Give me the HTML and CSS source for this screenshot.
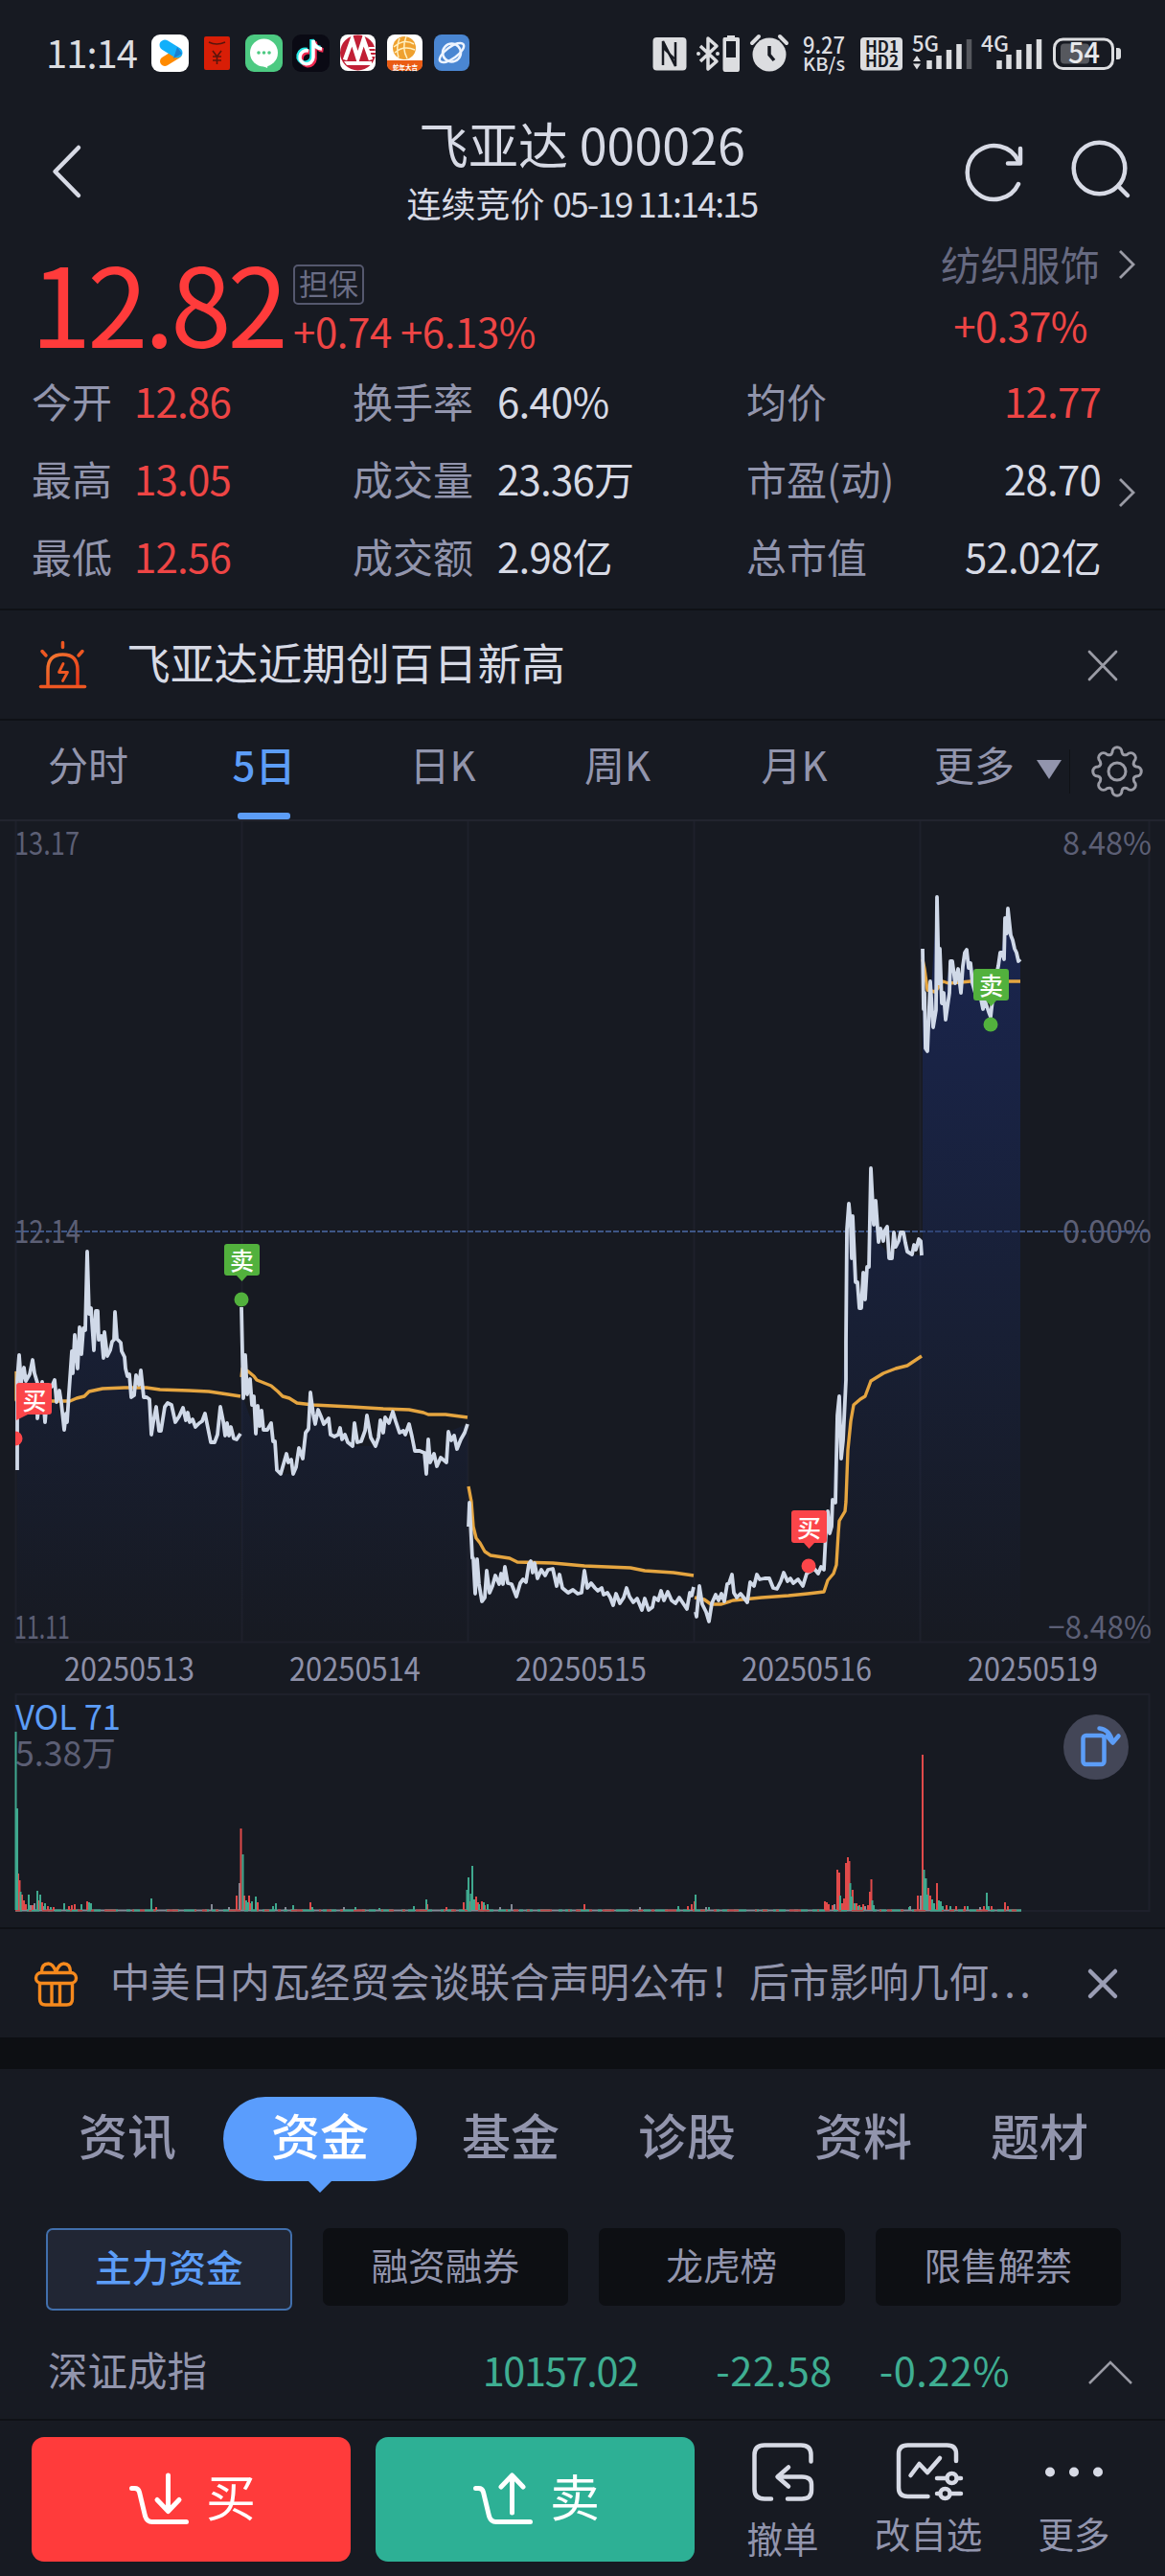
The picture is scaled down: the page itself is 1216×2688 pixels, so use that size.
FILE: index.html
```
<!DOCTYPE html>
<html lang="zh-CN">
<head>
    <meta charset="UTF-8">
    <meta name="viewport" content="width=device-width, initial-scale=1.0">
    <title>飞亚达 000026</title>
    <link rel="stylesheet" href="styles.css">
</head>
<body>

<!-- 状态栏 -->
<div class="status-bar">
    <span class="status-time">11:14</span>
    <svg class="status-apps" width="334" height="40" viewBox="157 37 334 40">
        <rect x="158" y="37" width="39" height="39" rx="9" fill="#fff"/>
        <path d="M172 65l13-8" stroke="#ff8a00" stroke-width="10" stroke-linecap="round"/>
        <path d="M172 48l13 8" stroke="#12b0fa" stroke-width="11" stroke-linecap="round"/>
        <path d="M181 62l9-5-5-7z" fill="#1a7fd0"/>
        <rect x="213" y="39" width="27" height="35" rx="2" fill="#d81e06"/>
        <path d="M218 45q8 4 17 0M222 54l4.500 6 4.500-6M226.500 60v8M222 60h9M222 64h9" fill="none" stroke="#5a150c" stroke-width="1.600"/>
        <rect x="256" y="37" width="39" height="39" rx="9" fill="#4dca82"/>
        <circle cx="275.500" cy="56" r="14.500" fill="#fff"/>
        <path d="M270 68l9 4 1-6z" fill="#fff"/>
        <g fill="#4dca82"><circle cx="270" cy="56" r="1.800"/><circle cx="275.500" cy="56" r="1.800"/><circle cx="281" cy="56" r="1.800"/></g>
        <rect x="305" y="37" width="39" height="39" rx="9" fill="#0a0a14"/>
        <g fill="none" stroke-width="4.500">
            <path d="M322 54a7 7 0 1 0 5 7v-18q1 8 9 9" stroke="#ef2950" transform="translate(1.500 1.500)"/>
            <path d="M322 54a7 7 0 1 0 5 7v-18q1 8 9 9" stroke="#25e8e4" transform="translate(-1.500 -1)"/>
            <path d="M322 54a7 7 0 1 0 5 7v-18q1 8 9 9" stroke="#fff" stroke-width="3.500"/>
        </g>
        <rect x="355" y="37" width="37" height="38" rx="8" fill="#fff"/>
        <circle cx="373.500" cy="56" r="18.500" fill="#c11f35"/>
        <path d="M360 63.500l7.500-21 6 19 6-19 7.500 21" fill="none" stroke="#fff" stroke-width="4.500"/>
        <path d="M359 65h29v4h-26z" fill="#fff"/>
        <path d="M385 51h7M386 55h6M387 59h5" stroke="#fff" stroke-width="2"/>
        <rect x="404" y="37" width="37" height="38" rx="8" fill="#fff"/>
        <path d="M404 64h37v4q0 7-8 7h-21q-8 0-8-7z" fill="#ea5c14"/>
        <circle cx="422" cy="51" r="12" fill="#efa12f"/>
        <path d="M411 50q11-9 21-3M412 56q9-8 21-3M417 41q-4 10-1 20M424 39q-5 12 1 23" fill="none" stroke="#fff0c0" stroke-width="1.500"/>
        <text x="410" y="74" class="tiny-text">蛇年大吉</text>
        <rect x="453" y="37" width="37" height="38" rx="8" fill="#4a86d2"/>
        <circle cx="471.500" cy="56" r="9.500" fill="none" stroke="#eef4ff" stroke-width="2.500"/>
        <ellipse cx="471.500" cy="56" rx="15" ry="6" transform="rotate(-36 471.500 56)" fill="none" stroke="#eef4ff" stroke-width="2.500"/>
    </svg>
    <svg class="status-icons" width="492" height="40" viewBox="680 36 492 40">
        <rect x="681.500" y="39" width="35" height="34.500" rx="4" fill="#dcdde0"/>
        <path d="M692 68V43l13 26V44" fill="none" stroke="#171a22" stroke-width="2.500"/>
        <path d="M692 50l13 12M692 46l13 21" stroke="#171a22" stroke-width="1.800"/>
        <path d="M731 48l17 16-9 8V40l9 8-17 16" fill="none" stroke="#dcdde0" stroke-width="3.500" stroke-linejoin="round"/>
        <circle cx="729" cy="56" r="2" fill="#dcdde0"/><circle cx="749" cy="56" r="2" fill="#dcdde0"/>
        <path d="M759 37h8v2h3.500q1.500 0 1.500 2v31q0 3-2 3h-13q-2.500 0-2.500-3V41q0-2 1.500-2h3z" fill="#dcdde0"/>
        <rect x="758" y="43" width="10" height="17" fill="#171a22"/>
        <circle cx="803" cy="57" r="17.500" fill="#dcdde0"/>
        <path d="M785 45l7-7M821 45l-7-7" stroke="#dcdde0" stroke-width="4" stroke-linecap="round"/>
        <path d="M803 48v9l5 6" fill="none" stroke="#171a22" stroke-width="3.500"/>
        <g class="status-text">
            <text x="838" y="56" font-size="24" textLength="44" lengthAdjust="spacingAndGlyphs">9.27</text>
            <text x="838" y="74" font-size="19" textLength="44" lengthAdjust="spacingAndGlyphs">KB/s</text>
            <text x="952" y="53.500" font-size="23" textLength="28" lengthAdjust="spacingAndGlyphs">5G</text>
            <text x="1024" y="53.500" font-size="23" textLength="29" lengthAdjust="spacingAndGlyphs">4G</text>
        </g>
        <rect x="898" y="39" width="44" height="34.500" rx="4" fill="#dcdde0"/>
        <g class="hd-text">
            <text x="903" y="54.500" textLength="35" lengthAdjust="spacingAndGlyphs">HD1</text>
            <text x="903" y="70" textLength="35" lengthAdjust="spacingAndGlyphs">HD2</text>
        </g>
        <path d="M953 64l4-6 4 6zM953 66.500l4 6 4-6z" fill="#dcdde0"/>
        <path d="M970 72v-9M980 72V58M990.500 72V52M1001 72V46" stroke="#dcdde0" stroke-width="5.500"/>
        <path d="M1011.500 72V41" stroke="#56585e" stroke-width="5.500"/>
        <path d="M1043 72v-9M1053 72V57M1063.500 72V52M1074 72V46M1084.500 72V41" stroke="#dcdde0" stroke-width="5.500"/>
        <rect x="1100.500" y="41" width="61" height="30.500" rx="9" fill="none" stroke="#dcdde0" stroke-width="3"/>
        <rect x="1107" y="45.500" width="30" height="21" rx="4" fill="#56585e"/>
        <path d="M1165 50h2q3 0 3 3v6q0 3-3 3h-2z" fill="#dcdde0"/>
        <text x="1115" y="66" class="battery-text" textLength="33" lengthAdjust="spacingAndGlyphs">54</text>
    </svg>
</div>

<!-- 标题 -->
<div class="header">
    <svg class="back-icon" width="40" height="60" viewBox="50 149 40 60"><path d="M82 154l-24.500 25L82 204" fill="none" stroke="#d7dae5" stroke-width="4.500" stroke-linecap="round" stroke-linejoin="round"/></svg>
    <div class="header-title">
        <h1>飞亚达 <span class="code">000026</span></h1>
        <p>连续竞价 <span class="num">05-19 11:14:15</span></p>
    </div>
    <svg class="header-actions" width="180" height="70" viewBox="1004 144 180 70">
        <g fill="none" stroke="#d7dae5" stroke-width="4.500" stroke-linecap="round" stroke-linejoin="round">
            <path d="M1063 192a28 28 0 1 1 0-24"/>
            <path d="M1065 155v15.500h-13"/>
            <circle cx="1147.500" cy="175.500" r="26.800"/>
            <path d="M1168 195l9 9"/>
        </g>
    </svg>
</div>

<!-- 报价 -->
<div class="quote">
    <div class="quote-price">12.82</div>
    <div class="quote-change">
        <span class="tag">担保</span>
        <span class="change">+0.74 +6.13%</span>
    </div>
    <div class="sector">
        <div class="sector-name">纺织服饰</div>
        <div class="sector-change">+0.37%</div>
    </div>
    <svg class="chevron" width="20" height="34" viewBox="0 0 20 34"><path d="M2 3l14 14L2 31" fill="none" stroke="#9a9ba5" stroke-width="2.800"/></svg>
</div>

<div class="stats">
    <div class="stats-grid">
        <span class="label">今开</span><span class="value up">12.86</span>
        <span class="label">换手率</span><span class="value">6.40%</span>
        <span class="label">均价</span><span class="value right up">12.77</span>
        <span class="label">最高</span><span class="value up">13.05</span>
        <span class="label">成交量</span><span class="value">23.36万</span>
        <span class="label">市盈(动)</span><span class="value right">28.70</span>
        <span class="label">最低</span><span class="value up">12.56</span>
        <span class="label">成交额</span><span class="value">2.98亿</span>
        <span class="label">总市值</span><span class="value right">52.02亿</span>
    </div>
    <svg class="stats-chevron" width="20" height="34" viewBox="0 0 20 34"><path d="M2 3l14 14L2 31" fill="none" stroke="#9a9ba5" stroke-width="2.800"/></svg>
</div>

<!-- 提示条 -->
<div class="notice">
    <svg class="notice-icon" width="52" height="54" viewBox="39 665 52 54">
        <defs><linearGradient id="alarm" x1="0" y1="0" x2="1" y2="1"><stop offset="0" stop-color="#f47b32"/><stop offset="1" stop-color="#e93416"/></linearGradient></defs>
        <g fill="none" stroke="#ee5722" stroke-width="3.500" stroke-linecap="round" stroke-linejoin="round">
            <path stroke="url(#alarm)" d="M50 713v-16q0-16 15.500-16T81 697v16"/>
            <path d="M42.500 714.500h46"/>
            <path d="M65.500 668.500v5M44 677.500l4 4.500M86 677.500l-4 4.500"/>
            <path stroke-width="2.800" d="M66 690.500l-4.500 9h9l-5 9"/>
        </g>
    </svg>
    <span class="notice-text">飞亚达近期创百日新高</span>
    <svg class="close" width="34" height="34" viewBox="0 0 34 34"><path d="M3 3l28 29M31 3L3 32" stroke="#9a9ba5" stroke-width="2.800" stroke-linecap="round"/></svg>
</div>

<!-- 周期切换 -->
<div class="period-tabs">
    <span class="period p1">分时</span>
    <span class="period p2 active">5日</span>
    <span class="period p3">日K</span>
    <span class="period p4">周K</span>
    <span class="period p5">月K</span>
    <span class="period more">更多</span>
    <svg class="triangle" width="26" height="20" viewBox="0 0 26 20"><path d="M0 0h26L13 20z" fill="#9295ad"/></svg>
    <span class="divider"></span>
    <svg class="gear" width="56" height="56" viewBox="-28 -28 56 56">
        <g fill="none" stroke="#9a9ba5" stroke-width="3" stroke-linejoin="round">
            <path d="M-5-20C-5-27 5-27 5-20Q6-16 10.500-17.700C15.500-22.600 22.600-15.500 17.700-10.500Q16-6 20-5C27-5 27 5 20 5Q16 6 17.700 10.500C22.600 15.500 15.500 22.600 10.500 17.700Q6 16 5 20C5 27-5 27-5 20Q-6 16-10.500 17.700C-15.500 22.600-22.600 15.500-17.700 10.500Q-16 6-20 5C-27 5-27-5-20-5Q-16-6-17.700-10.500C-22.600-15.500-15.500-22.600-10.500-17.700Q-6-16-5-20Z"/>
            <circle r="9"/>
        </g>
    </svg>
</div>

<!-- 五日走势图 -->
<div class="chart">
    <svg width="1216" height="1154" viewBox="0 857 1216 1154">
        <defs>
            <linearGradient id="area" gradientUnits="userSpaceOnUse" x1="0" y1="930" x2="0" y2="1714">
                <stop offset="0" stop-color="#1b2960" stop-opacity=".75"/>
                <stop offset=".5" stop-color="#1a2a5c" stop-opacity=".38"/>
                <stop offset="1" stop-color="#1a2a5c" stop-opacity="0"/>
            </linearGradient>
        </defs>
        <path class="grid" d="M16.500 857V1713.500H1199.500V857M252.500 857V1713M488.500 857V1713M724.500 857V1713M960.500 857V1713"/>
        <rect class="grid" x="16.500" y="1768" width="1183" height="226"/>
        <path class="zero-line" d="M16 1285H1199"/>

        <g class="area">
            <path d="M18 1714V1443L31 1434 39 1443 47 1462 59 1463 67 1492 72 1453 78 1393 83 1400 89 1388 91 1306 93 1371 98 1409 102 1368 108 1417 117 1400 120 1369 126 1401 137 1458 147 1430 156 1460 158 1497 163 1468 168 1493 175 1464 183 1484 191 1469 204 1489 214 1475 220 1505 230 1468 235 1498 251 1496V1714Z"/>
            <path d="M252 1714V1364L254 1459 267 1496 283 1485 293 1538 306 1538 316 1522 324 1453 338 1486 368 1509 392 1509 410 1473 433 1514 456 1530 466 1526 468 1494 488 1486V1714Z"/>
            <path d="M489 1714V1593L496 1663 527 1635 539 1666 554 1629 577 1637 593 1662 610 1639 640 1675 670 1680 724 1656V1714Z"/>
            <path d="M725 1714V1687L740 1692 764 1643 780 1672 790 1643 811 1658 860 1638 874 1477 883 1400 886 1256 899 1365 907 1322 909 1219 917 1296 931 1313 943 1286 952 1309 963 1310V1714Z"/>
            <path d="M963 1714V990L968 1097 978 936 983 1047 992 1003 1003 1036 1009 991 1034 1061 1052 948 1059 990 1065 1001V1714Z"/>
        </g>

        <!-- 均价线 -->
        <g class="avg-line">
            <path d="M17 1431V1461L55 1462 73 1462 80 1459 88 1457 93 1452 107 1449 130 1448 153 1448 167 1450 197 1451 218 1452 238 1455 251 1457"/>
            <path d="M252 1437L253 1428 259 1431 265 1436 268 1440 283 1446 290 1452 295 1457 302 1459 310 1464 327 1466 367 1468 400 1470 427 1471 442 1474 447 1476 465 1476 488 1479"/>
            <path d="M489 1551L492 1567 494 1593 497 1605 501 1610 506 1619 512 1623 532 1626 540 1630 577 1631 610 1634 658 1636 673 1639 703 1641 724 1644"/>
            <path d="M725 1667L735 1669 742 1674 753 1674 765 1670 795 1667 823 1665 843 1663 860 1661 864 1649 870 1642 873 1633 875 1600 876 1587 882 1577 883 1567 885 1513 888 1483 891 1466 898 1460 903 1457 909 1441 922 1433 935 1428 947 1425 956 1419 962 1415"/>
            <path d="M963 1001L965 1011 968 1033 976 1035 984 1024 990 1026 1003 1025 1013 1024 1065 1024"/>
        </g>

        <!-- 价格线 -->
        <g class="price-line">
            <path d="M18 1534V1440L20 1414 22 1443 25 1427 27 1441 31 1434 34 1419 36 1433 39 1443 39 1480 44 1442 47 1484 50 1447 54 1447 57 1440 59 1463 62 1451 64 1464 67 1492 69 1475 70 1484 72 1453 75 1410 76 1433 78 1393 81 1428 83 1385 85 1413 87 1386 89 1388 91 1306 93 1371 95 1365 98 1409 100 1368 102 1368 103 1398 106 1394 108 1417 109 1390 112 1415 115 1409 117 1400 119 1398 120 1369 122 1397 126 1401 127 1410 130 1416 131 1428 133 1436 135 1434 137 1458 140 1456 142 1435 145 1445 147 1430 150 1458 153 1458 156 1460 158 1497 160 1484 163 1468 166 1493 168 1493 172 1468 175 1464 179 1466 183 1484 187 1478 191 1469 194 1482 196 1474 198 1484 201 1481 204 1489 208 1485 211 1483 214 1475 217 1490 220 1505 224 1505 227 1497 230 1468 233 1483 235 1498 237 1485 239 1498 241 1489 244 1501 247 1502 251 1496"/>
            <path d="M252 1364L254 1459 256 1414 258 1455 261 1439 263 1466 265 1457 267 1496 269 1467 271 1488 273 1472 275 1492 279 1492 283 1485 285 1504 287 1504 289 1534 293 1538 295 1531 299 1517 301 1526 304 1523 306 1538 309 1531 312 1511 316 1522 319 1495 322 1491 324 1453 327 1476 329 1486 332 1471 335 1478 338 1486 343 1480 345 1497 349 1499 353 1497 355 1490 357 1502 360 1497 363 1505 368 1509 370 1485 373 1505 377 1504 381 1493 383 1477 387 1500 392 1509 395 1500 397 1482 400 1495 402 1479 406 1485 410 1473 413 1483 417 1495 421 1493 423 1497 427 1486 430 1499 433 1514 438 1514 443 1516 445 1538 447 1502 449 1526 453 1517 456 1530 460 1521 466 1526 468 1494 471 1503 474 1498 477 1512 481 1502 485 1495 488 1486"/>
            <path d="M489 1593L490 1568 493 1626 494 1626 496 1663 498 1627 500 1653 503 1671 506 1667 508 1639 511 1662 514 1655 517 1644 521 1653 523 1642 525 1653 527 1635 530 1652 534 1653 539 1666 543 1652 546 1648 549 1651 552 1632 554 1629 556 1641 558 1631 561 1647 565 1638 569 1644 572 1638 577 1637 581 1655 584 1643 587 1657 593 1662 598 1659 603 1663 607 1662 610 1639 613 1657 617 1652 621 1657 624 1660 628 1657 630 1664 634 1662 637 1667 640 1675 643 1663 647 1673 651 1667 654 1657 657 1666 661 1672 665 1668 670 1680 673 1668 677 1680 681 1677 683 1667 687 1670 690 1660 693 1670 697 1661 701 1670 705 1673 709 1667 713 1673 717 1679 720 1662 722 1665 724 1656"/>
            <path d="M726 1682L727 1687 730 1655 733 1674 737 1682 740 1692 743 1673 747 1664 750 1670 753 1663 756 1671 759 1653 761 1652 764 1643 766 1662 769 1667 773 1663 777 1668 780 1672 783 1651 787 1655 790 1643 793 1648 798 1647 803 1647 807 1657 811 1658 815 1650 818 1641 822 1650 825 1647 828 1652 833 1648 838 1655 842 1642 845 1640 850 1637 854 1642 857 1635 860 1638 862 1600 864 1577 866 1600 868 1593 869 1565 872 1568 874 1477 876 1457 878 1522 880 1503 883 1440 883 1400 884 1283 886 1256 888 1279 889 1313 890 1269 893 1338 895 1338 897 1365 899 1365 901 1328 903 1356 905 1322 907 1322 909 1219 912 1278 914 1253 917 1296 919 1282 922 1295 923 1285 926 1280 928 1313 931 1313 933 1286 935 1301 938 1295 940 1286 943 1286 945 1297 947 1306 952 1309 954 1299 956 1304 959 1293 961 1295 962 1310"/>
            <path d="M963 990L964 1053 965 1036 966 1094 968 1097 971 1024 974 1072 977 1054 978 936 980 1026 981 990 983 1047 985 1036 987 1064 991 1036 992 1003 994 1003 997 1026 1000 1011 1003 1036 1005 1008 1007 994 1009 991 1011 1010 1013 1005 1015 1026 1019 1040 1022 1033 1026 1053 1028 1044 1032 1056 1034 1061 1038 1026 1042 1008 1044 994 1046 994 1048 1001 1049 958 1051 974 1052 948 1055 976 1057 981 1059 990 1061 994 1063 1003 1065 1001"/>
        </g>

        <!-- 买卖点 -->
        <g class="marks">
            <circle class="sell" cx="252" cy="1356" r="7.500"/>
            <path class="sell" d="M237 1298h31q3 0 3 3v27q0 3-3 3h-10l-5.500 6-5.500-6h-10q-3 0-3-3v-27q0-3 3-3z"/>
            <text x="252.500" y="1325">卖</text>
            <circle class="sell" cx="1034" cy="1069" r="7.500"/>
            <path class="sell" d="M1019 1011h31q3 0 3 3v27q0 3-3 3h-10l-5.500 6-5.500-6h-10q-3 0-3-3v-27q0-3 3-3z"/>
            <text x="1034.500" y="1038">卖</text>
            <path class="buy" d="M16 1493.500a7.500 7.500 0 0 1 0 15z"/>
            <path class="buy" d="M20 1443h31q3 0 3 3v27q0 3-3 3H29l-12 6v-36q0-3 3-3z"/>
            <text x="36" y="1471">买</text>
            <circle class="buy" cx="844" cy="1634" r="7.500"/>
            <path class="buy" d="M829 1576h31q3 0 3 3v28q0 3-3 3h-10l-5.500 6-5.500-6h-10q-3 0-3-3v-28q0-3 3-3z"/>
            <text x="844.500" y="1604">买</text>
        </g>

        <!-- 坐标 -->
        <g class="axis">
            <text x="15" y="892" textLength="68" lengthAdjust="spacingAndGlyphs">13.17</text>
            <text x="15" y="1297" textLength="69" lengthAdjust="spacingAndGlyphs">12.14</text>
            <text x="15" y="1709.500" textLength="58" lengthAdjust="spacingAndGlyphs">11.11</text>
            <text x="1109" y="892" textLength="93" lengthAdjust="spacingAndGlyphs">8.48%</text>
            <text x="1109" y="1297" textLength="93" lengthAdjust="spacingAndGlyphs">0.00%</text>
            <text x="1094" y="1709.500" textLength="108" lengthAdjust="spacingAndGlyphs">−8.48%</text>
        </g>
        <g class="dates">
            <text x="67" y="1754" textLength="136" lengthAdjust="spacingAndGlyphs">20250513</text>
            <text x="302" y="1754" textLength="137" lengthAdjust="spacingAndGlyphs">20250514</text>
            <text x="538" y="1754" textLength="137" lengthAdjust="spacingAndGlyphs">20250515</text>
            <text x="774" y="1754" textLength="136" lengthAdjust="spacingAndGlyphs">20250516</text>
            <text x="1010" y="1754" textLength="136" lengthAdjust="spacingAndGlyphs">20250519</text>
        </g>

        <!-- 成交量 -->
        <text class="vol-title" x="16" y="1805" textLength="110" lengthAdjust="spacingAndGlyphs">VOL 71</text>
        <text class="vol-max" x="16" y="1843" textLength="105" lengthAdjust="spacingAndGlyphs">5.38万</text>
        <path class="vol flat" d="M16 1993.500H1066"/>
        <path class="vol green-dash" d="M16 1993.500H1066"/>
        <path class="vol red-dash" d="M16 1993.500H1066"/>
        <path class="vol grey" d="M32 1993v-5M36 1993v-7M45 1993v-4M221 1993v-6M239 1993v-3M250 1993v-28M298 1993v-3M359 1993v-3M522 1993v-3M534 1993v-6M668 1993v-3M737 1993v-3M871 1993v-6M876 1993v-6M903 1993v-4M950 1993v-4M961 1993v-15M1023 1993v-3"/>
        <path class="vol red" d="M19 1993v-38M20.500 1993v-31M23 1993v-16M25 1993v-10M27 1993v-6M34 1993v-5M40 1993v-10M44 1993v-8M50 1993v-4M56 1993v-3M72 1993v-4M75 1993v-5M78 1993v-6M91 1993v-9M163 1993v-3M247 1993v-15M251.500 1993v-85M255 1993v-15M260 1993v-15M262 1993v-7M269 1993v-8M324 1993v-8M446 1993v-6M466 1993v-3M484 1993v-8M490 1993v-9M497 1993v-14M499 1993v-8M503 1993v-9M506 1993v-5M610 1993v-6M718 1993v-4M722 1993v-6M725 1993v-9M861 1993v-9M863 1993v-8M865 1993v-6M869 1993v-5M874 1993v-42M876 1993v-39M879 1993v-7M881 1993v-12M883 1993v-49M885 1993v-55M886.500 1993v-51M890 1993v-21M894 1993v-7M897 1993v-5M901 1993v-6M906 1993v-5M908 1993v-19M909.500 1993v-32M958 1993v-15M963 1993v-162M965 1993v-22M969 1993v-23M971 1993v-15M978 1993v-28M988 1993v-5M998 1993v-4M1007 1993v-4M1027 1993v-4M1035 1993v-4M1049 1993v-8M1052 1993v-4"/>
        <path class="vol green" d="M16.500 1993v-186M18 1993v-106M21.500 1993v-19M30 1993v-16M39 1993v-20M42 1993v-16M47 1993v-7M53 1993v-3M67 1993v-7M85 1993v-6M93 1993v-8M95 1993v-7M158 1993v-12M253.500 1993v-58M257 1993v-10M259 1993v-8M263 1993v-9M267 1993v-14M285 1993v-4M288 1993v-7M306 1993v-5M326 1993v-3M371 1993v-3M396 1993v-2M432 1993v-4M445 1993v-11M487.500 1993v-21M489 1993v-34M491.500 1993v-17M493 1993v-46M495 1993v-11M500 1993v-6M505 1993v-8M509 1993v-6M708 1993v-4M726 1993v-16M740 1993v-3M877 1993v-15M887.500 1993v-28M889 1993v-14M892 1993v-7M896 1993v-4M899 1993v-3M910.500 1993v-10M912 1993v-5M949 1993v-3M964.500 1993v-42M966.500 1993v-33M968 1993v-16M973 1993v-11M975 1993v-7M980 1993v-10M982 1993v-9M984 1993v-4M992 1993v-4M1010 1993v-4M1030 1993v-18M1032 1993v-4"/>
    </svg>
    <div class="rotate-btn">
        <svg width="68" height="68" viewBox="1110 1789 68 68">
            <g fill="none" stroke="#5c9df7" stroke-width="4.500" stroke-linecap="round" stroke-linejoin="round">
                <rect x="1130.500" y="1811" width="22" height="30" rx="3"/>
                <path d="M1147.500 1803.500q11 1 14 15M1155.500 1811.500l6 7 6-7"/>
            </g>
        </svg>
    </div>
</div>

<div class="notice news">
    <svg class="gift" width="48" height="50" viewBox="34 2043 48 50">
        <g fill="none" stroke="#f5891d" stroke-width="3.400" stroke-linejoin="round">
            <rect x="37.500" y="2056.500" width="42" height="11" rx="5.500"/>
            <path d="M41.500 2068v16q0 6 6 6h22q6 0 6-6v-16M54 2068v22M62.500 2068v22"/>
            <path d="M43.500 2056q0-9 7-9 5 0 8 9 3-9 8-9 7 0 7 9"/>
        </g>
    </svg>
    <span class="notice-text">中美日内瓦经贸会谈联合声明公布！后市影响几何<span class="dots">...</span></span>
    <svg class="close" width="34" height="34" viewBox="0 0 34 34"><path d="M4 4l26 26M30 4L4 30" stroke="#9a9db4" stroke-width="4.500" stroke-linecap="round"/></svg>
</div>

<div class="band"></div>

<!-- 资讯栏目 -->
<div class="info-tabs">
    <span class="info-tab">资讯</span>
    <span class="info-tab active">资金</span>
    <span class="info-tab">基金</span>
    <span class="info-tab">诊股</span>
    <span class="info-tab">资料</span>
    <span class="info-tab">题材</span>
</div>

<div class="sub-tabs">
    <span class="sub-tab active">主力资金</span>
    <span class="sub-tab">融资融券</span>
    <span class="sub-tab">龙虎榜</span>
    <span class="sub-tab">限售解禁</span>
</div>

<!-- 指数 -->
<div class="index-bar">
    <span class="index-name">深证成指</span>
    <span class="index-value">10157.02</span>
    <span class="index-diff">-22.58</span>
    <span class="index-percent">-0.22%</span>
    <svg class="index-arrow" width="48" height="28" viewBox="0 0 48 28"><path d="M2 25L24 3l22 22" fill="none" stroke="#9a9ba5" stroke-width="2.500"/></svg>
</div>

<!-- 底部操作 -->
<div class="bottom-bar">
    <div class="trade buy-btn">
        <svg width="64" height="58" viewBox="135 2577 64 58"><path d="M138.500 2595.500h3q4 0 5 4l6 25q2 6 7 6h36M176.500 2582v36M165 2607.500l11.500 12 11.500-12" fill="none" stroke="#fff" stroke-width="5" stroke-linecap="round" stroke-linejoin="round"/></svg>
        <span>买</span>
    </div>
    <div class="trade sell-btn">
        <svg width="64" height="58" viewBox="135 2577 64 58"><path d="M138.500 2595.500h3q4 0 5 4l6 25q2 6 7 6h36M176.500 2621v-37M165 2594l11.500-12 11.500 12" fill="none" stroke="#fff" stroke-width="5" stroke-linecap="round" stroke-linejoin="round"/></svg>
        <span>卖</span>
    </div>
    <div class="action cancel">
        <svg width="70" height="66" viewBox="782 2546 70 66">
            <path d="M805 2607.500h-7q-10.500 0-10.500-10v-36q0-10 10.500-10h38q10.500 0 10.500 10v7M822 2607.500h15q10 0 10-9v-6q0-8-10-8h-23M823 2574.500l-11.500 10 11.500 10" fill="none" stroke="#d7dae5" stroke-width="4.500" stroke-linecap="round" stroke-linejoin="round"/>
        </svg>
        <span>撤单</span>
    </div>
    <div class="action">
        <svg width="74" height="66" viewBox="932 2546 74 66">
            <g fill="none" stroke="#d7dae5" stroke-width="4.500" stroke-linecap="round" stroke-linejoin="round">
                <path d="M968.500 2605h-21q-9.500 0-9.500-9v-35.500q0-9 9.500-9h41q9.500 0 9.500 9v7.500"/>
                <path d="M950.500 2583l9-12 8.500 9 13-15"/>
                <path d="M978 2586h10M1000 2586h3M978 2602h3M993 2602h10"/>
                <circle cx="993.500" cy="2586" r="5"/><circle cx="986.500" cy="2602" r="5"/>
            </g>
        </svg>
        <span>改自选</span>
    </div>
    <div class="action">
        <svg width="70" height="66" viewBox="1087 2546 70 66">
            <g fill="#d7dae5"><circle cx="1097" cy="2579.500" r="5"/><circle cx="1122" cy="2579.500" r="5"/><circle cx="1147" cy="2579.500" r="5"/></g>
        </svg>
        <span>更多</span>
    </div>
</div>

</body>
</html>
```
FILE: styles.css
```
* {
    box-sizing: border-box;
}
body {
    margin: 0;
    width: 1216px;
    height: 2688px;
    background-color: #171a22;
    color: #d7dae5;
    font-family: "Noto Sans CJK SC", "Noto Sans", sans-serif;
    font-size: 42px;
    overflow: hidden;
}
svg {
    display: block;
    flex: none;
}

/* 状态栏 */
.status-bar {
    display: flex;
    align-items: center;
    height: 112px;
    padding: 0 44px 0 48px;
}
.status-time {
    width: 109px;
    line-height: 40px;
    font-size: 40px;
    color: #dcdde0;
    letter-spacing: -1px;
    padding-bottom: 5px;
}
.status-icons {
    margin-left: auto;
    overflow: visible;
}
.status-text text {
    font-weight: 500;
    fill: #dcdde0;
}
.hd-text text {
    font-size: 17px;
    font-weight: bold;
    fill: #171a22;
}
.battery-text {
    font-size: 30px;
    font-weight: 500;
    fill: #e8e9ec;
}
.tiny-text {
    font-size: 6.5px;
    font-weight: bold;
    fill: #fff;
}

/* 标题 */
.header {
    display: flex;
    align-items: flex-start;
    height: 136px;
    padding: 0 32px 0 50px;
}
.back-icon {
    margin: 37px 121px 0 0;
}
.header-title {
    flex: 1;
    text-align: center;
    white-space: nowrap;
}
.header-title h1 {
    margin: 7px 0 0;
    font-size: 52px;
    font-weight: normal;
    line-height: 62px;
}
.header-title p {
    margin: 9px 0 0;
    font-size: 36px;
    line-height: 42px;
}
.num {
    letter-spacing: -1.9px;
}
.header-actions {
    margin-top: 32px;
}

/* 报价 */
.quote {
    display: flex;
    height: 130px;
    padding-left: 32px;
}
.quote-price {
    width: 274px;
    font-size: 114px;
    line-height: 130px;
    letter-spacing: -4px;
    color: #ff3b3b;
    padding-top: 1px;
}
.quote-change {
    display: flex;
    flex-direction: column;
    align-items: flex-start;
    padding-top: 28px;
}
.tag {
    width: 74px;
    height: 42px;
    border: 2px solid #55586e;
    border-radius: 5px;
    font-size: 31px;
    line-height: 34px;
    text-align: center;
    color: #6a6d85;
}
.change,
.sector-change,
.value.up {
    color: #ee4545;
}
.change {
    margin-top: 2px;
    line-height: 50px;
    letter-spacing: -0.4px;
    white-space: nowrap;
}
.sector {
    margin-left: auto;
    width: 170px;
    text-align: center;
}
.sector-name {
    font-size: 41.5px;
    line-height: 54px;
    color: #666980;
}
.sector-change {
    margin-top: 7px;
    line-height: 60px;
    letter-spacing: -0.7px;
}
.chevron {
    margin: 11px 29px 0 17px;
}
.stats {
    display: flex;
    height: 259px;
    border-bottom: 2px solid #0f1116;
}
.stats-grid {
    display: grid;
    grid-template-columns: 107px 228px 151px 260px 180px 190px;
    grid-auto-rows: 81px;
    padding-left: 33px;
    line-height: 80px;
    white-space: nowrap;
}
.label {
    color: #9295ad;
}
.value {
    letter-spacing: -0.8px;
}
.right {
    text-align: right;
}
.stats-chevron {
    margin: 119px 0 0 18px;
}

/* 提示条 */
.notice {
    display: flex;
    align-items: center;
    height: 115px;
    padding: 0 48px 0 39px;
    border-bottom: 2px solid #0f1116;
    font-size: 45.8px;
    line-height: 60px;
}
.notice-icon {
    margin-right: 41px;
}
.notice-text {
    padding-bottom: 7px;
}
.close {
    margin-left: auto;
}
.news {
    border: none;
    border-top: 2px solid #0f1116;
    padding-left: 34px;
    font-size: 41.7px;
    color: #9295ad;
}
.gift {
    margin-right: 33px;
}
.dots {
    letter-spacing: 4.5px;
}

/* 周期 */
.period-tabs {
    display: flex;
    height: 105px;
    border-bottom: 2px solid #22242f;
    color: #9295ad;
}
.period {
    line-height: 90px;
    text-align: center;
    position: relative;
}
.p1 { width: 184px; }
.p2 { width: 183px; }
.p3 { width: 190px; }
.p4 { width: 175px; }
.p5 { width: 194px; }
.more {
    width: 156px;
    text-align: right;
    padding-right: 23px;
}
.period.active {
    color: #5c9df7;
    font-weight: 500;
}
.period.active::after {
    content: "";
    position: absolute;
    left: 64px;
    bottom: 0;
    width: 55px;
    height: 7px;
    border-radius: 3px;
    background-color: #5c9df7;
}
.triangle {
    margin-top: 41px;
}
.divider {
    width: 1px;
    height: 46px;
    margin: 30px 21px 0 8px;
    background-color: #0f1116;
}
.gear {
    margin-top: 25px;
}

/* 图表 */
.chart {
    position: relative;
    height: 1154px;
}
.grid {
    fill: none;
    stroke: #1e202b;
    stroke-width: 2;
}
.zero-line {
    stroke: #3e5686;
    stroke-width: 2;
    stroke-dasharray: 6 2;
}
.area {
    fill: url(#area);
}
.avg-line,
.price-line {
    fill: none;
    stroke-width: 3.4;
    stroke-linejoin: round;
}
.avg-line {
    stroke: #e5a540;
}
.price-line {
    stroke: #d0d9e8;
    stroke-width: 3.8;
}
.marks text {
    font-size: 25px;
    font-weight: 500;
    text-anchor: middle;
    fill: #fff;
}
.sell {
    fill: #52b13d;
}
.buy {
    fill: #fb4549;
}
.axis text {
    font-size: 33px;
    fill: #5c5f75;
}
.dates text {
    font-size: 33.5px;
    fill: #8d90a8;
}
.vol-title {
    font-size: 36px;
    fill: #5c9df7;
}
.vol-max {
    font-size: 36px;
    fill: #5c5f75;
}
.vol {
    fill: none;
    stroke-width: 2;
}
.red {
    stroke: #e04a4a;
}
.green {
    stroke: #3fa88e;
}
.grey,
.flat {
    stroke: #858a96;
}
.green-dash {
    stroke: #3fa88e;
    stroke-dasharray: 7 5 13 9 4 3;
}
.red-dash {
    stroke: #c24a4c;
    stroke-dasharray: 5 9 3 11 12 17 2 6;
}
.rotate-btn {
    position: absolute;
    left: 1110px;
    top: 932px;
    width: 68px;
    height: 68px;
    border-radius: 50%;
    background-color: #434657;
}

.band {
    height: 33px;
    background-color: #0d0f13;
}

/* 栏目 */
.info-tabs {
    display: flex;
    height: 166px;
    padding: 29px 0 0 33px;
    font-size: 51px;
    font-weight: 500;
    line-height: 79px;
    color: #9295ad;
    text-align: center;
}
.info-tab {
    width: 184px;
    height: 88px;
}
.info-tab:first-child {
    width: 200px;
}
.info-tab.active {
    position: relative;
    width: 202px;
    margin-right: 6px;
    border-radius: 44px;
    background-color: #5a9dfd;
    color: #fff;
}
.info-tab.active::after {
    content: "";
    position: absolute;
    left: 88px;
    top: 87px;
    border: 13px solid transparent;
    border-top-color: #5a9dfd;
    border-bottom: 0;
}
.sub-tabs {
    display: flex;
    gap: 32px;
    height: 103px;
    padding-left: 48px;
    font-size: 38.7px;
    line-height: 75px;
    text-align: center;
    color: #9295ad;
}
.sub-tab {
    width: 256.5px;
    height: 81px;
    border-radius: 7px;
    background-color: #0d0f13;
}
.sub-tab.active {
    height: 86px;
    border: 2px solid #416fac;
    background-color: #212634;
    color: #5c9df7;
    font-weight: 500;
}

/* 指数 */
.index-bar {
    display: flex;
    align-items: center;
    height: 98px;
    padding: 0 33px 0 50px;
    border-bottom: 2px solid #0f1116;
    font-size: 41.5px;
    line-height: 60px;
    color: #3fae92;
    white-space: nowrap;
}
.index-bar span {
    padding-bottom: 8px;
}
.index-name {
    width: 300px;
    color: #9295ad;
}
.index-value {
    width: 316px;
    text-align: right;
    letter-spacing: -1.3px;
}
.index-diff {
    width: 203px;
    text-align: right;
    letter-spacing: 0.6px;
}
.index-percent {
    width: 185px;
    text-align: right;
    letter-spacing: 0.5px;
}
.index-arrow {
    margin-left: auto;
}

/* 底部 */
.bottom-bar {
    display: flex;
    height: 162px;
    padding: 17px 0 0 33px;
}
.trade {
    display: flex;
    justify-content: center;
    gap: 17px;
    width: 333px;
    height: 130px;
    margin-right: 26px;
    padding: 35px 0 0 2px;
    border-radius: 13px;
    font-size: 52px;
    line-height: 51px;
    color: #fff;
}
.buy-btn {
    background-color: #ff3b3b;
}
.sell-btn {
    margin-right: 16px;
    background-color: #2db095;
}
.action {
    display: flex;
    flex-direction: column;
    align-items: center;
    width: 152px;
    padding-top: 3px;
    font-size: 37.5px;
    line-height: 46px;
    color: #9295ad;
}
.action span {
    margin-top: 8px;
}
.cancel span {
    margin-top: 13px;
}
```
